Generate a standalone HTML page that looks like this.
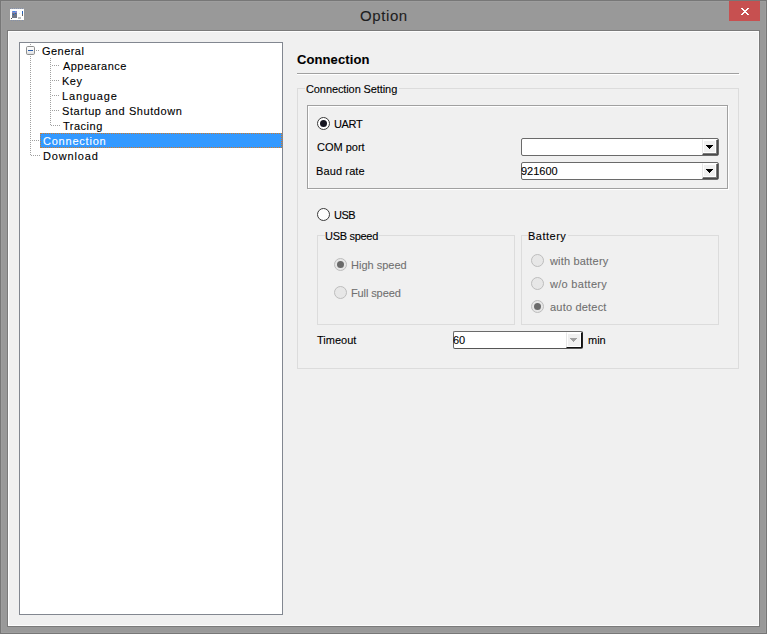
<!DOCTYPE html>
<html><head><meta charset="utf-8">
<style>
*{margin:0;padding:0;box-sizing:border-box}
html,body{width:767px;height:634px;overflow:hidden}
body{position:relative;background:#999999;font-family:"Liberation Sans",sans-serif;font-size:11px;color:#000}
.a{position:absolute}
.t{position:absolute;white-space:nowrap;line-height:13px;height:13px;-webkit-text-stroke:0.1px currentColor}
.gray{color:#707070}
.radio{position:absolute;width:13px;height:13px;border-radius:50%;border:1px solid #3a3a3a;background:#fff}
.radio.dis{border-color:#bdbdbd;background:#e7e7e7}
.dot{position:absolute;left:2px;top:2px;width:7px;height:7px;border-radius:50%;background:#151520}
.radio.dis .dot{background:#6a6a6a}
.combo{position:absolute;height:18px;background:#fff;border:1px solid #6a6a6a;border-radius:2px}
.btn{position:absolute;right:0;top:0;width:16px;height:16px;background:#f0f0f0;border-left:1px solid #e6e6e6;border-top:1px solid #fff;border-right:1px solid #4a4a4a;border-bottom:1px solid #4a4a4a;box-shadow:inset -1px -1px 0 #7c7c7c,inset -2px -2px 0 #fff,inset 1px 1px 0 #fff}
.btn.blk{border-right-color:#111;border-bottom-color:#111;box-shadow:inset -1px -1px 0 #fff,inset 1px 1px 0 #fff}
.btn svg{position:absolute;left:3px;top:5px;shape-rendering:crispEdges}
</style></head><body>
<!-- window frame -->
<div class="a" style="left:0;top:0;width:767px;height:634px;border:1px solid #777"></div>
<div class="a" style="left:1px;top:1px;width:765px;height:632px;border:1px solid #9e9e9e"></div>
<svg class="a" style="left:9px;top:8px;shape-rendering:crispEdges" width="16" height="14">
 <path d="M1 0h1v1h-1zM3 0h1v1h-1zM5 0h1v1h-1zM7 0h1v1h-1zM9 0h1v1h-1zM11 0h1v1h-1zM13 0h1v1h-1z" fill="#8590a8"/>
 <path d="M2 0h1v1h-1zM4 0h1v1h-1zM6 0h1v1h-1zM8 0h1v1h-1zM10 0h1v1h-1zM12 0h1v1h-1zM14 0h1v1h-1z" fill="#a4a8b0"/>
 <rect x="1" y="1" width="14" height="11" fill="#fff"/>
 <path d="M2 12h1v1h-1zM4 12h1v1h-1zM6 12h1v1h-1zM8 12h1v1h-1zM10 12h1v1h-1zM13 12h1v1h-1z" fill="#8590a8"/>
 <rect x="3" y="3" width="5" height="7" fill="#727786"/>
 <rect x="3" y="3" width="5" height="2" fill="#8a8ccc"/>
 <rect x="4" y="3" width="2" height="1" fill="#3a8ee8"/>
 <rect x="6" y="5" width="1" height="1" fill="#1860c8"/>
 <rect x="4" y="6" width="1" height="1" fill="#1860c8"/>
 <rect x="2" y="10" width="1" height="1" fill="#555"/>
 <rect x="13" y="3" width="1" height="3" fill="#2a64b8"/>
 <rect x="13" y="6" width="1" height="2" fill="#666"/>
 <rect x="9" y="9" width="3" height="2" fill="#c0c0c0"/>
 <rect x="10" y="5" width="1" height="1" fill="#e0e0e0"/>
</svg>
<div class="t" style="left:360px;top:6px;font-size:15px;line-height:20px;height:20px;letter-spacing:0.6px;color:#1e1e1e">Option</div>
<div class="a" style="left:729px;top:1px;width:31px;height:20px;background:#c75050">
 <svg width="31" height="20" style="position:absolute;left:0;top:0"><path d="M12 7h1v1h-1zM13 7h1v1h-1zM18 7h1v1h-1zM19 7h1v1h-1zM13 8h1v1h-1zM14 8h1v1h-1zM17 8h1v1h-1zM18 8h1v1h-1zM14 9h1v1h-1zM15 9h1v1h-1zM16 9h1v1h-1zM17 9h1v1h-1zM15 10h1v1h-1zM16 10h1v1h-1zM14 11h1v1h-1zM15 11h1v1h-1zM16 11h1v1h-1zM17 11h1v1h-1zM13 12h1v1h-1zM14 12h1v1h-1zM17 12h1v1h-1zM18 12h1v1h-1zM12 13h1v1h-1zM13 13h1v1h-1zM18 13h1v1h-1zM19 13h1v1h-1z" fill="#fff" shape-rendering="crispEdges"/></svg>
</div>
<!-- client -->
<div class="a" style="left:7px;top:30px;width:753px;height:597px;border:1px solid #7a7a7a;background:#f0f0f0"></div>
<div class="a" style="left:8px;top:31px;width:751px;height:595px;border:1px solid #fdfdfd;border-right-color:#f8f8f8"></div>

<!-- tree -->
<div class="a" style="left:19px;top:42px;width:264px;height:573px;border:1px solid #828790;background:#fff"></div>
<svg class="a" style="left:0;top:0" width="290" height="170">
 <g fill="#a0a0a0">
  <rect x="30" y="44" width="1" height="1"/>
  <path d="M30 56h1v1h-1zM30 58h1v1h-1zM30 60h1v1h-1zM30 62h1v1h-1zM30 64h1v1h-1zM30 66h1v1h-1zM30 68h1v1h-1zM30 70h1v1h-1zM30 72h1v1h-1zM30 74h1v1h-1zM30 76h1v1h-1zM30 78h1v1h-1zM30 80h1v1h-1zM30 82h1v1h-1zM30 84h1v1h-1zM30 86h1v1h-1zM30 88h1v1h-1zM30 90h1v1h-1zM30 92h1v1h-1zM30 94h1v1h-1zM30 96h1v1h-1zM30 98h1v1h-1zM30 100h1v1h-1zM30 102h1v1h-1zM30 104h1v1h-1zM30 106h1v1h-1zM30 108h1v1h-1zM30 110h1v1h-1zM30 112h1v1h-1zM30 114h1v1h-1zM30 116h1v1h-1zM30 118h1v1h-1zM30 120h1v1h-1zM30 122h1v1h-1zM30 124h1v1h-1zM30 126h1v1h-1zM30 128h1v1h-1zM30 130h1v1h-1zM30 132h1v1h-1zM30 134h1v1h-1zM30 136h1v1h-1zM30 138h1v1h-1zM30 140h1v1h-1zM30 142h1v1h-1zM30 144h1v1h-1zM30 146h1v1h-1zM30 148h1v1h-1zM30 150h1v1h-1zM30 152h1v1h-1zM30 154h1v1h-1z"/>
  <path d="M36 50h1v1h-1zM38 50h1v1h-1z"/>
  <path d="M32 140h1v1h-1zM34 140h1v1h-1zM36 140h1v1h-1zM38 140h1v1h-1z"/>
  <path d="M31 155h1v1h-1zM33 155h1v1h-1zM35 155h1v1h-1zM37 155h1v1h-1zM39 155h1v1h-1z"/>
  <path d="M50 58h1v1h-1zM50 60h1v1h-1zM50 62h1v1h-1zM50 64h1v1h-1zM50 66h1v1h-1zM50 68h1v1h-1zM50 70h1v1h-1zM50 72h1v1h-1zM50 74h1v1h-1zM50 76h1v1h-1zM50 78h1v1h-1zM50 80h1v1h-1zM50 82h1v1h-1zM50 84h1v1h-1zM50 86h1v1h-1zM50 88h1v1h-1zM50 90h1v1h-1zM50 92h1v1h-1zM50 94h1v1h-1zM50 96h1v1h-1zM50 98h1v1h-1zM50 100h1v1h-1zM50 102h1v1h-1zM50 104h1v1h-1zM50 106h1v1h-1zM50 108h1v1h-1zM50 110h1v1h-1zM50 112h1v1h-1zM50 114h1v1h-1zM50 116h1v1h-1zM50 118h1v1h-1zM50 120h1v1h-1zM50 122h1v1h-1zM50 124h1v1h-1z"/>
  <path d="M52 65h1v1h-1zM54 65h1v1h-1zM56 65h1v1h-1zM58 65h1v1h-1z"/>
  <path d="M52 80h1v1h-1zM54 80h1v1h-1zM56 80h1v1h-1zM58 80h1v1h-1z"/>
  <path d="M52 95h1v1h-1zM54 95h1v1h-1zM56 95h1v1h-1zM58 95h1v1h-1z"/>
  <path d="M52 110h1v1h-1zM54 110h1v1h-1zM56 110h1v1h-1zM58 110h1v1h-1z"/>
  <path d="M51 125h1v1h-1zM53 125h1v1h-1zM55 125h1v1h-1zM57 125h1v1h-1zM59 125h1v1h-1z"/>
 </g>
 <defs><linearGradient id="bx" x1="0" y1="0" x2="0" y2="1"><stop offset="0" stop-color="#fff"/><stop offset="0.5" stop-color="#f4f4f4"/><stop offset="1" stop-color="#dcdcdc"/></linearGradient></defs>
 <rect x="26.5" y="46.5" width="8" height="8" rx="1.2" fill="url(#bx)" stroke="#8e8f8f"/>
 <rect x="28" y="50" width="5" height="1" fill="#2458a8"/>
</svg>
<div class="a" style="left:40px;top:133px;width:242px;height:15px;background:#3399ff;border:1px dotted #d07a2a"></div>
<div class="t" style="left:42px;top:45px;letter-spacing:0.45px">General</div>
<div class="t" style="left:63px;top:60px;letter-spacing:0.44px">Appearance</div>
<div class="t" style="left:62px;top:75px;letter-spacing:0.5px">Key</div>
<div class="t" style="left:62px;top:90px;letter-spacing:0.85px">Language</div>
<div class="t" style="left:62px;top:105px;letter-spacing:0.58px">Startup and Shutdown</div>
<div class="t" style="left:63px;top:120px;letter-spacing:0.5px">Tracing</div>
<div class="t" style="left:43px;top:135px;letter-spacing:0.78px;color:#fff">Connection</div>
<div class="t" style="left:43px;top:150px;letter-spacing:0.86px">Download</div>

<!-- right panel -->
<div class="t" style="left:297px;top:50px;font-weight:bold;font-size:13px;line-height:20px;height:20px;letter-spacing:0.1px">Connection</div>
<div class="a" style="left:297px;top:73px;width:442px;height:1px;background:#a0a0a0"></div>
<div class="a" style="left:297px;top:74px;width:443px;height:1px;background:#fff"></div>

<!-- outer group -->
<div class="a" style="left:297px;top:88px;width:442px;height:281px;border:1px solid #dcdcdc"></div>
<div class="a" style="left:305px;top:84px;width:94px;height:10px;background:#f0f0f0"></div>
<div class="t" style="left:306px;top:83px;letter-spacing:-0.1px">Connection Setting</div>

<!-- UART frame -->
<div class="a" style="left:308px;top:106px;width:421px;height:84px;border:1px solid #fff"></div>
<div class="a" style="left:307px;top:105px;width:421px;height:84px;border:1px solid #a0a0a0"></div>
<div class="radio" style="left:317px;top:117px"><div class="dot"></div></div>
<div class="t" style="left:334px;top:118px;letter-spacing:-0.33px">UART</div>
<div class="t" style="left:317px;top:141px">COM port</div>
<div class="combo" style="left:521px;top:138px;width:198px"><div class="btn"><svg width="7" height="4"><path d="M0 0h7v1h-1v1h-1v1h-1v1h-1v-1h-1v-1h-1v-1h-1z" fill="#000"/></svg></div></div>
<div class="t" style="left:316px;top:165px;letter-spacing:0.12px">Baud rate</div>
<div class="combo" style="left:521px;top:162px;width:198px"><div class="t" style="left:-1px;top:2px">921600</div><div class="btn"><svg width="7" height="4"><path d="M0 0h7v1h-1v1h-1v1h-1v1h-1v-1h-1v-1h-1v-1h-1z" fill="#000"/></svg></div></div>

<div class="radio" style="left:317px;top:208px"></div>
<div class="t" style="left:334px;top:209px;letter-spacing:-0.5px">USB</div>

<!-- USB speed group -->
<div class="a" style="left:317px;top:235px;width:198px;height:90px;border:1px solid #dcdcdc"></div>
<div class="a" style="left:325px;top:231px;width:54px;height:10px;background:#f0f0f0"></div>
<div class="t" style="left:325px;top:230px;letter-spacing:-0.3px">USB speed</div>
<div class="radio dis" style="left:334px;top:258px"><div class="dot"></div></div>
<div class="t gray" style="left:351px;top:259px">High speed</div>
<div class="radio dis" style="left:334px;top:286px"></div>
<div class="t gray" style="left:351px;top:287px;letter-spacing:-0.11px">Full speed</div>

<!-- Battery group -->
<div class="a" style="left:521px;top:235px;width:198px;height:90px;border:1px solid #dcdcdc"></div>
<div class="a" style="left:528px;top:231px;width:40px;height:10px;background:#f0f0f0"></div>
<div class="t" style="left:528px;top:230px;letter-spacing:0.5px">Battery</div>
<div class="radio dis" style="left:531px;top:254px"></div>
<div class="t gray" style="left:550px;top:255px;letter-spacing:0.18px">with battery</div>
<div class="radio dis" style="left:531px;top:277px"></div>
<div class="t gray" style="left:550px;top:278px;letter-spacing:0.3px">w/o battery</div>
<div class="radio dis" style="left:531px;top:300px"><div class="dot"></div></div>
<div class="t gray" style="left:550px;top:301px;letter-spacing:0.2px">auto detect</div>

<div class="t" style="left:317px;top:334px">Timeout</div>
<div class="combo" style="left:453px;top:331px;width:130px;border-right-color:#222;border-bottom-color:#555"><div class="t" style="left:-1px;top:2px">60</div><div class="btn blk"><svg width="7" height="4"><path d="M0 0h7v1h-1v1h-1v1h-1v1h-1v-1h-1v-1h-1v-1h-1z" fill="#a0a0a0"/></svg></div></div>
<div class="t" style="left:588px;top:334px">min</div>
</body></html>
